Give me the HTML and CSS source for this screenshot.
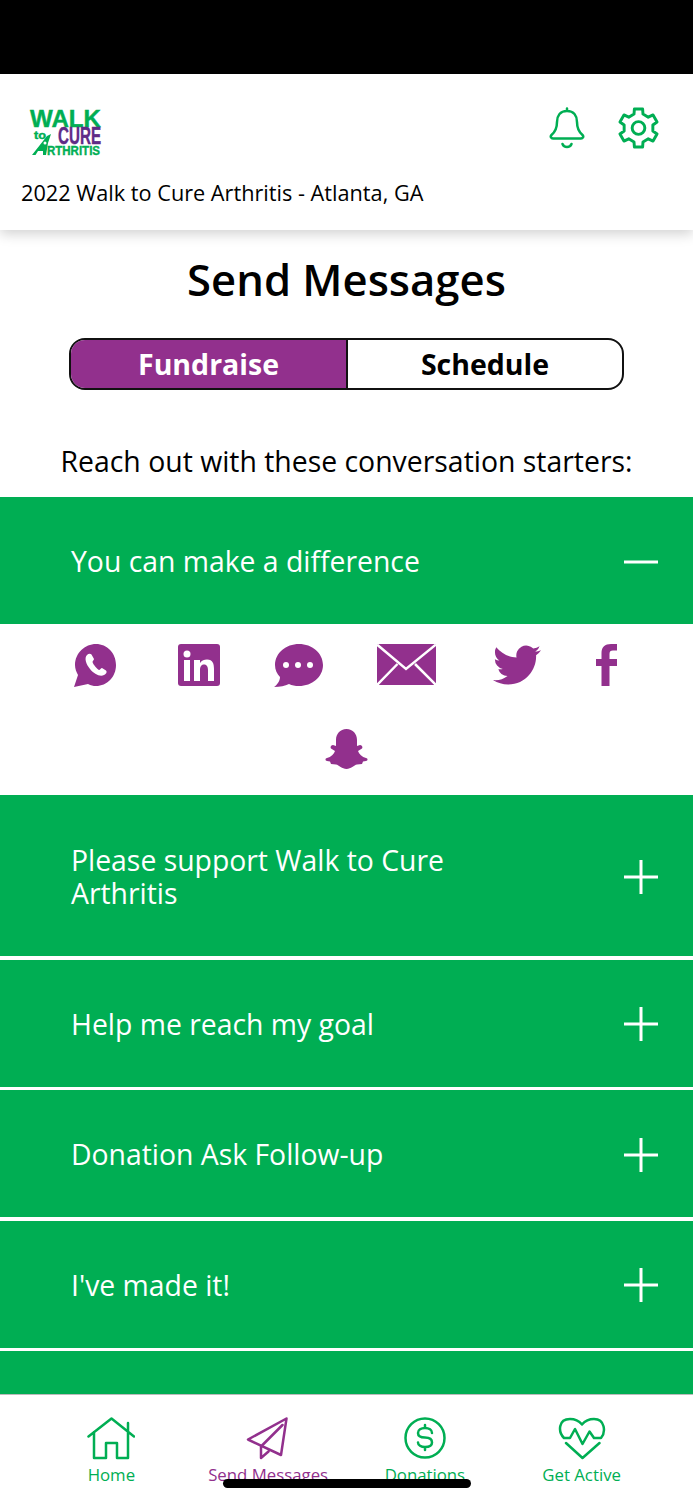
FILE: index.html
```html
<!DOCTYPE html>
<html lang="en">

<head>
    <meta charset="UTF-8">
    <meta name="viewport" content="width=device-width, initial-scale=1.0">
    <title>Send Messages</title>
    <link rel="stylesheet" href="styles.css">
</head>

<body>
    <div class="app">
        <div class="status-bar"></div>

        <header class="top">
            <div class="top-row">
                <svg class="logo" viewBox="0 0 72 46">
                    <text class="logo-word" x="0" y="17" font-size="23" textLength="71" lengthAdjust="spacingAndGlyphs">WALK</text>
                    <text class="logo-word" x="4" y="29" font-size="10" textLength="12" lengthAdjust="spacingAndGlyphs">to</text>
                    <text class="logo-word logo-purple" x="28" y="34" font-size="23" textLength="43" lengthAdjust="spacingAndGlyphs">CURE</text>
                    <polygon class="logo-arrow" points="2,45 17,26 21,24 18,33 16,45 13,45 13,41 8,41 5.500,45" />
                    <circle cx="15" cy="33" r="1.500" fill="#fff" />
                    <text class="logo-word" x="17" y="45" font-size="13" textLength="53" lengthAdjust="spacingAndGlyphs">RTHRITIS</text>
                </svg>
                <div class="top-icons">
                    <svg class="bell" viewBox="0 0 36 42" fill="none" stroke="#00ae53" stroke-width="2.500" stroke-linecap="round" stroke-linejoin="round">
                        <path d="M18 4C11 4 8 9 8 15C8 22 6 25 2.500 28C1 29.500 2 31.500 4 31.500H32C34 31.500 35 29.500 33.500 28C30 25 28 22 28 15C28 9 25 4 18 4ZM18 1.500V4" />
                        <path d="M13.500 37C15 41 21 41 22.500 37" />
                    </svg>
                    <svg class="gear" viewBox="0 0 42 42" fill="none" stroke="#00ae53" stroke-width="3" stroke-linejoin="round">
                        <path d="M16.400 6.700L16.800 1.500H25.200L25.600 6.700L31 9.900L35.900 7.600L40 14.800L35.700 17.900V24.100L40 27.200L35.900 34.400L31 32.100L25.600 35.300L25.200 40.500H16.800L16.400 35.300L11 32.100L6.100 34.400L2 27.200L6.300 24.100V17.900L2 14.800L6.100 7.600L11 9.900Z" />
                        <circle cx="21" cy="21" r="6.500" />
                    </svg>
                </div>
            </div>
            <div class="event-name">2022 Walk to Cure Arthritis - Atlanta, GA</div>
        </header>

        <main class="content">
            <h1 class="title">Send Messages</h1>
            <div class="toggle">
                <div class="toggle-item active">Fundraise</div>
                <div class="toggle-item">Schedule</div>
            </div>
            <p class="prompt">Reach out with these conversation starters:</p>

            <div class="row">
                <span class="row-text">You can make a difference</span>
                <svg class="row-icon" viewBox="0 0 34 34" stroke="#fff" stroke-width="3"><path d="M0 17H34" /></svg>
            </div>

            <div class="share">
                <svg class="ico-wa" viewBox="0 0 43 43">
                    <path d="M22 0C33 0 42 9 42 21C42 33 33 42 22 42C19 42 17 41.500 14 40L0 43L4 31C2.500 28 1 25 1 21C1 9 11 0 22 0Z" fill="#92308d" />
                    <path d="M13 11C10 14 12 20 16 25C20 30 26 33 30 31C33 29.500 33 27.500 32 26.500L28 24C27 24 26 26 25 26C23 25 19.500 21 18.500 18C18.500 17 20 16 20 15L17.500 10.500C16.500 9.500 14.500 9.500 13 11Z" fill="#fff" />
                </svg>
                <svg class="ico-in" viewBox="0 0 42 42">
                    <rect width="42" height="42" rx="3" fill="#92308d" />
                    <circle cx="9" cy="10" r="3.500" fill="#fff" />
                    <path d="M6 16H12V37H6ZM16 16H22V19C24 16 26 15.500 29 15.500C35 15.500 36 20 36 25V37H30V26C30 23 29 20.500 26 20.500C23 20.500 22 23 22 26V37H16Z" fill="#fff" />
                </svg>
                <svg class="ico-chat" viewBox="0 0 49 43">
                    <path d="M25 0C38 0 49 9 49 21C49 33 38 42 25 42C21 42 18 41.500 15 40C11 42 6 43 0 43C3 41 6 37 6 33C3 30 1 26 1 21C1 9 12 0 25 0Z" fill="#92308d" />
                    <circle cx="12" cy="21" r="3" fill="#fff" />
                    <circle cx="24" cy="21" r="3" fill="#fff" />
                    <circle cx="36" cy="21" r="3" fill="#fff" />
                </svg>
                <svg class="ico-mail" viewBox="0 0 59 41">
                    <rect width="59" height="41" fill="#92308d" />
                    <path d="M0 0.500L29 25L59 0.500M0 41L20.500 20M59 41L38 20" fill="none" stroke="#fff" stroke-width="2.500" />
                </svg>
                <svg class="ico-tw" viewBox="0 1.500 24 21" preserveAspectRatio="none">
                    <path d="M23.953 4.570a10 10 0 01-2.825.775 4.958 4.958 0 002.163-2.723c-.951.555-2.005.959-3.127 1.184a4.920 4.920 0 00-8.384 4.482C7.690 8.095 4.067 6.130 1.640 3.162a4.822 4.822 0 00-.666 2.475c0 1.710.870 3.213 2.188 4.096a4.904 4.904 0 01-2.228-.616v.060a4.923 4.923 0 003.946 4.827 4.996 4.996 0 01-2.212.085 4.936 4.936 0 004.604 3.417 9.867 9.867 0 01-6.102 2.105c-.390 0-.779-.023-1.170-.067a13.995 13.995 0 007.557 2.209c9.053 0 13.998-7.496 13.998-13.985 0-.210 0-.420-.015-.630A9.935 9.935 0 0024 4.590z" fill="#92308d" />
                </svg>
                <svg class="ico-fb" viewBox="0 0 21 42">
                    <path d="M5.500 42V22H0V15H5.500V9C5.500 3 9 0 15 0H21V6.500H17C14.500 6.500 13.500 7.500 13.500 10V15H21V22H13.500V42Z" fill="#92308d" />
                </svg>
                <svg class="ico-snap" viewBox="0 0 43 40">
                    <path d="M21.500 0C28 0 32 5 32 11V17L35 16C37 16 38 18 37 19.500L33 22C34 25 37 28 41 29C43 29.500 43 31.500 41 32L38 32.500L37 35L32 35.500C29 36 26 40 21.500 40C17 40 14 36 11 35.500L6 35L5 32.500L2 32C0 31.500 0 29.500 2 29C6 28 9 25 10 22L6 19.500C5 18 6 16 8 16L11 17V11C11 5 15 0 21.500 0Z" fill="#92308d" />
                </svg>
            </div>

            <div class="row row-tall">
                <span class="row-text">Please support Walk to Cure Arthritis</span>
                <svg class="row-icon" viewBox="0 0 34 34" stroke="#fff" stroke-width="3"><path d="M0 17H34M17 0V34" /></svg>
            </div>
            <div class="row">
                <span class="row-text">Help me reach my goal</span>
                <svg class="row-icon" viewBox="0 0 34 34" stroke="#fff" stroke-width="3"><path d="M0 17H34M17 0V34" /></svg>
            </div>
            <div class="row">
                <span class="row-text">Donation Ask Follow-up</span>
                <svg class="row-icon" viewBox="0 0 34 34" stroke="#fff" stroke-width="3"><path d="M0 17H34M17 0V34" /></svg>
            </div>
            <div class="row">
                <span class="row-text">I've made it!</span>
                <svg class="row-icon" viewBox="0 0 34 34" stroke="#fff" stroke-width="3"><path d="M0 17H34M17 0V34" /></svg>
            </div>
            <div class="row"></div>
        </main>

        <nav class="tabs">
            <div class="tab">
                <svg viewBox="0 0 48 44" fill="none" stroke="#00ae53" stroke-width="2.500" stroke-linecap="round" stroke-linejoin="round">
                    <path d="M1.500 19.500L24.500 1.500L47 19.500M41 6V41H30V26H19V41H7V15" />
                </svg>
                <span>Home</span>
            </div>
            <div class="tab tab-active">
                <svg viewBox="0 0 43 44" fill="none" stroke="#92308d" stroke-width="2.500" stroke-linecap="round" stroke-linejoin="round">
                    <path d="M40 1.500L1.500 22.500L34.500 38ZM36 8L14.500 29.500V41L22 34.500" />
                </svg>
                <span>Send Messages</span>
            </div>
            <div class="tab">
                <svg viewBox="0 0 42 44" fill="none" stroke="#00ae53" stroke-width="2.500" stroke-linecap="round">
                    <circle cx="21" cy="21" r="19.500" />
                    <path d="M28 16C28 13 25 11 21 11C17 11 14 13 14 16C14 19 17 20.500 21 20.500C25 20.500 28 22 28 25.500C28 28.500 25 30 21 30C17 30 14 28 14 25.500M21 8V11M21 30V33" />
                </svg>
                <span>Donations</span>
            </div>
            <div class="tab">
                <svg viewBox="0 0 48 44" fill="none" stroke="#00ae53" stroke-width="2.500" stroke-linecap="round" stroke-linejoin="round">
                    <path d="M6 21C0 15 0 2 12 2C17 2 21 4 24 7.500C27 4 31 2 36 2C47 2 48 15 43 21H36L31.500 14.500L24.500 27L17 12L12 21ZM8 26L24.500 41L41.500 26" />
                </svg>
                <span>Get Active</span>
            </div>
            <div class="home-bar"></div>
        </nav>
    </div>
</body>

</html>
```

FILE: styles.css
```css
* {
    margin: 0;
    padding: 0;
    box-sizing: border-box;
}
body {
    font-family: "Open Sans", "Liberation Sans", sans-serif;
    color: #000;
    background: #fff;
}
.app {
    display: flex;
    flex-direction: column;
    width: 693px;
    height: 1500px;
    overflow: hidden;
}
.status-bar {
    flex: none;
    height: 74px;
    background: #000;
}

/* header */
.top {
    position: relative;
    z-index: 2;
    flex: none;
    height: 156px;
    padding: 33px 34px 0 21px;
    background: #fff;
    box-shadow: 0 4px 12px rgba(0, 0, 0, 0.18);
}
.top-row {
    display: flex;
    justify-content: space-between;
    align-items: flex-start;
    height: 55px;
}
.top-icons {
    display: flex;
    gap: 33px;
}
.bell {
    width: 36px;
    height: 42px;
}
.gear {
    width: 41px;
    height: 42px;
}
.event-name {
    margin-top: 16px;
    font-size: 21.700px;
    line-height: 30px;
}

/* logo */
.logo {
    width: 72px;
    height: 46px;
    margin: 3px 0 0 9px;
    overflow: visible;
}
.logo-word {
    font-family: "Liberation Sans", sans-serif;
    font-weight: 700;
    fill: #00ae53;
    stroke: #00ae53;
    stroke-width: 0.4px;
}
.logo-purple {
    fill: #5f2b87;
    stroke: #5f2b87;
}
.logo-arrow {
    fill: #00ae53;
}

/* main */
.content {
    flex: 1;
    min-height: 0;
    overflow: hidden;
}
.title {
    margin-top: 20px;
    font-size: 43.600px;
    line-height: 58px;
    font-weight: 600;
    text-align: center;
}
.toggle {
    display: flex;
    width: 555px;
    height: 52px;
    margin: 30px auto 0;
    border: 2px solid #111;
    border-radius: 16px;
    overflow: hidden;
}
.toggle-item {
    flex: 1;
    font-size: 28.500px;
    line-height: 48px;
    font-weight: 700;
    text-align: center;
}
.toggle-item.active {
    flex: none;
    width: 277px;
    color: #fff;
    background: #92308d;
    border-right: 2px solid #111;
}
.prompt {
    margin: 52px 0 17px;
    font-size: 28.400px;
    line-height: 38px;
    text-align: center;
}
.row {
    display: flex;
    justify-content: space-between;
    align-items: center;
    min-height: 127px;
    margin-bottom: 3.500px;
    padding: 2px 35px 0 71px;
    color: #fff;
    background: #00ae53;
    font-size: 28.350px;
    line-height: 33px;
}
.row-tall {
    min-height: 161px;
}
.row-text {
    max-width: 440px;
}
.row-icon {
    flex: none;
    width: 34px;
    height: 34px;
}

/* share icons */
.share {
    display: flex;
    flex-wrap: wrap;
    justify-content: center;
    gap: 42px 54px;
    margin-top: -3.500px;
    padding: 20px 40px 26px;
}
.ico-wa {
    width: 43px;
    height: 43px;
    margin-right: 7px;
}
.ico-in {
    width: 42px;
    height: 42px;
}
.ico-chat {
    width: 49px;
    height: 43px;
}
.ico-mail {
    width: 59px;
    height: 41px;
    margin-right: 3px;
}
.ico-tw {
    width: 48px;
    height: 42px;
    margin-right: 1px;
}
.ico-fb {
    width: 21px;
    height: 42px;
    margin-right: 2px;
}
.ico-snap {
    width: 43px;
    height: 40px;
}

/* bottom tabs */
.tabs {
    position: relative;
    flex: none;
    display: grid;
    grid-template-columns: repeat(4, 1fr);
    height: 106px;
    padding: 22px 33px 0;
    background: #fff;
    border-top: 1px solid #bbb;
}
.tab {
    display: flex;
    flex-direction: column;
    align-items: center;
    gap: 2px;
    color: #00ae53;
    font-size: 16.800px;
    line-height: 24px;
}
.tab svg {
    width: 48px;
    height: 44px;
}
.tab-active {
    color: #92308d;
}
.home-bar {
    position: absolute;
    left: 223px;
    top: 84px;
    width: 248px;
    height: 9px;
    border-radius: 5px;
    background: #000;
}
```
